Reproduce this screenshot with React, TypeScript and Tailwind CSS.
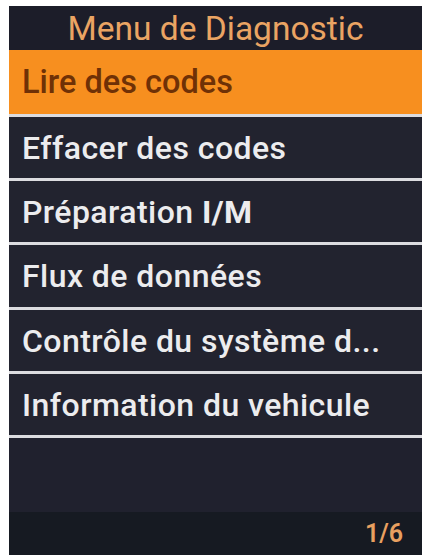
import React from "react";

const rows: { label: React.ReactNode; h: string }[] = [
  { label: <span>Effacer des codes</span>, h: "h-[61px]" },
  {
    label: (
      <span>
        Préparation <span className="font-bold">I/M</span>
      </span>
    ),
    h: "h-[61px]",
  },
  { label: <span>Flux de données</span>, h: "h-[62px]" },
  { label: <span>Contrôle du système d...</span>, h: "h-[61px]" },
  { label: <span>Information du vehicule</span>, h: "h-[61px]" },
];

export default function App() {
  return (
    <div
      className="w-[426px] h-[556px] bg-white pl-[9px] pr-[4px] pt-[6px] pb-[1px]"
      style={{ fontFamily: "Roboto, 'Noto Sans', sans-serif" }}
    >
      <div className="flex h-full w-full flex-col bg-[#dcdce0]">
        <div className="flex h-[44px] items-center justify-center bg-[#1c1d29] pt-[2px] text-[33.5px] leading-none text-[#eaa463]">
          Menu de Diagnostic
        </div>
        <div className="flex h-[64px] items-center bg-[#f78f1f] pl-[13px] text-[32.5px] font-medium text-[#6f3106]">
          <span>Lire des codes</span>
        </div>
        {rows.map((r, i) => (
          <div
            key={i}
            className={`mt-[3px] flex ${r.h} items-center bg-[#22232f] pl-[13px] text-[32px] font-medium tracking-[0.45px] text-[#ececee]`}
          >
            {r.label}
          </div>
        ))}
        <div className="mt-[3px] h-[74px] bg-[#20212e]" />
        <div className="flex flex-1 items-center justify-end bg-[#161a22] pr-[19px] text-[25px] font-semibold text-[#e9a060]">
          1/6
        </div>
      </div>
    </div>
  );
}
